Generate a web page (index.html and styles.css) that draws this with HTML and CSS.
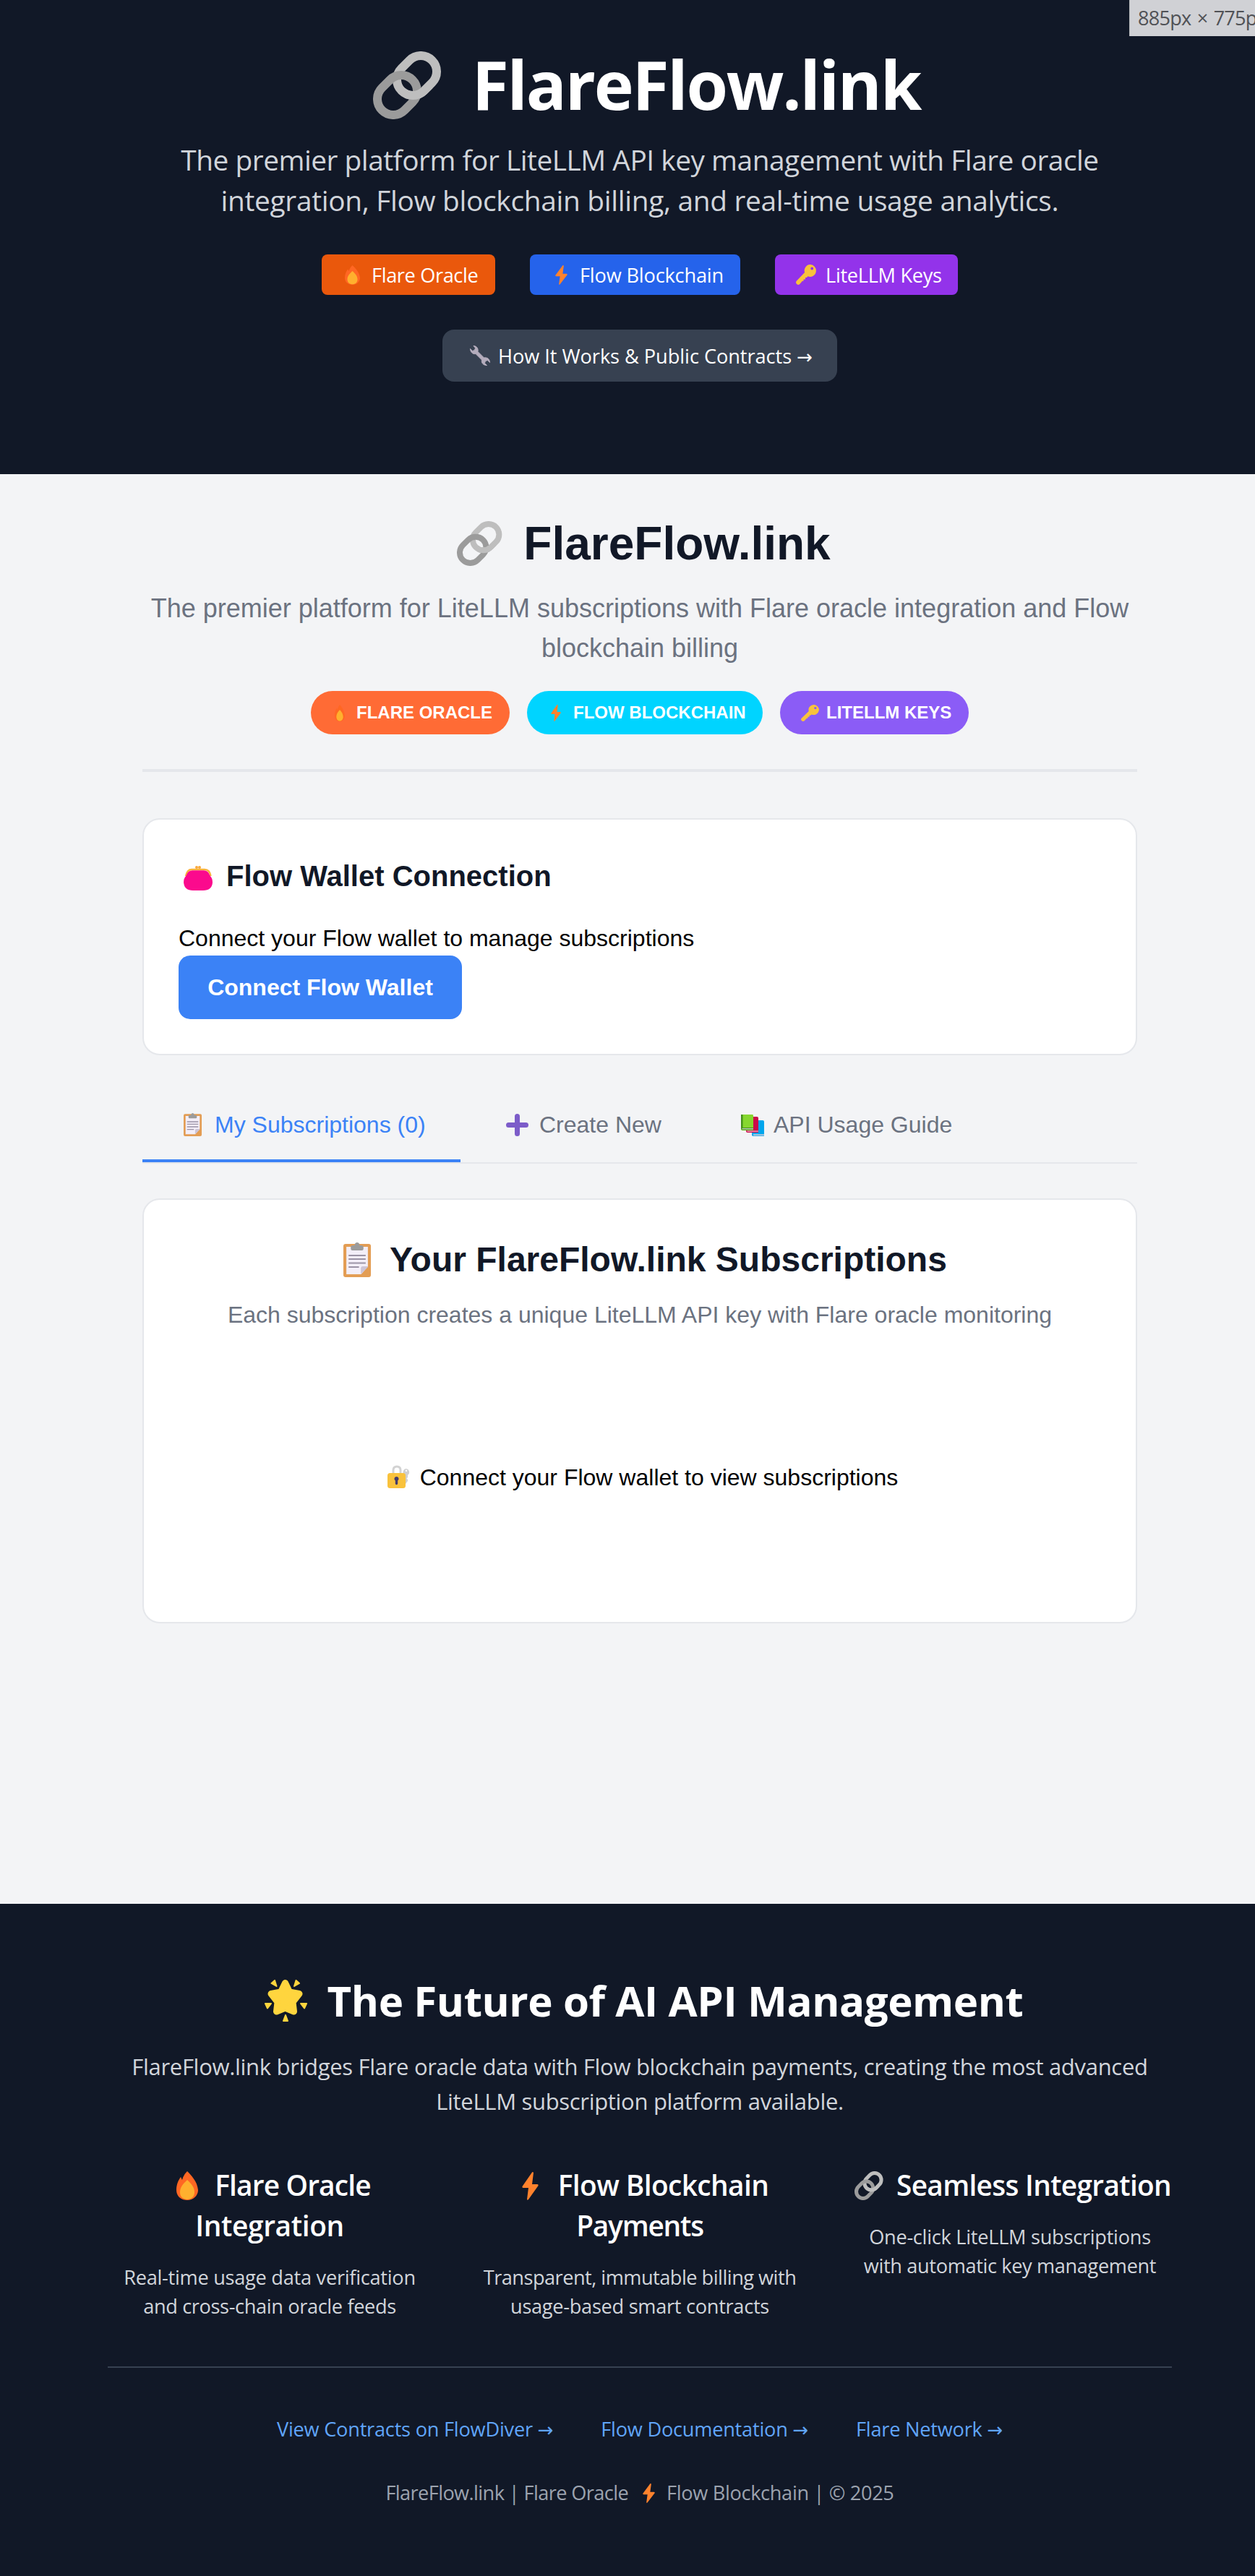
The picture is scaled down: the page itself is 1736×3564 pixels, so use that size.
FILE: index.html
```html
<!DOCTYPE html>
<html lang="en">
<head>
<meta charset="utf-8">
<title>FlareFlow.link</title>
<link rel="stylesheet" href="styles.css">
</head>
<body>
<svg class="sprite" aria-hidden="true">
  <defs>
    <clipPath id="link-over"><path d="M44 51H95V94H44z"/></clipPath>
    <symbol id="link" viewBox="0 0 95 94" preserveAspectRatio="none">
      <g fill="none" stroke-width="12">
        <rect x="30.7" y="11.5" width="59.6" height="44" rx="22" transform="rotate(-45 60.5 33.5)" stroke="#bebebe"/>
        <rect x="3.7" y="38.5" width="59.6" height="44" rx="22" transform="rotate(-45 33.5 60.5)" stroke="#9b9b9b"/>
        <g clip-path="url(#link-over)"><rect x="30.7" y="11.5" width="59.6" height="44" rx="22" transform="rotate(-45 60.5 33.5)" stroke="#bebebe"/></g>
      </g>
    </symbol>
    <symbol id="flame" viewBox="0 0 30 40" preserveAspectRatio="none">
      <path fill="#ff6723" d="M15 0C20 5 29 14 30 26C30 34 23 40 15 40C7 40 0 35 0 26C0 18 3 12 6 8C7 9 7 11 8 12C9 8 11 4 15 0Z"/>
      <path fill="#ffb02e" d="M15 12C19 16 25 21 25 29C25 35 21 39 15 39C9 39 5 35 5 29C5 21 11 16 15 12Z"/>
    </symbol>
    <symbol id="bolt" viewBox="0 0 23 39" preserveAspectRatio="none">
      <path fill="#ff822d" d="M14 .5L.5 20Q0 22 2 22H9L7 38Q7.500 39.500 9 38L22.500 19Q23 17 21 17H14L16 1Q15 -.5 14 .5Z"/>
    </symbol>
    <symbol id="key" viewBox="0 0 29 28" preserveAspectRatio="none">
      <path fill="#f9c23c" fill-rule="evenodd" d="M20 0A8.500 8.500 0 1 1 17 16.300L15.500 18H13.500V20.500H11V22.500L9 23L5.500 27A3.200 3.200 0 0 1 .8 22.700L12.500 11A8.500 8.500 0 0 1 20 0ZM23 3.500A2 2 0 1 0 23 7.500A2 2 0 1 0 23 3.500Z"/>
    </symbol>
    <symbol id="wrench" viewBox="0 0 28 28" preserveAspectRatio="none">
      <path fill="#b4acbc" stroke="#b4acbc" stroke-width="1" stroke-linejoin="round" d="M5 .5C9 .5 12 4 11 8.500L19.500 17C24 16 27.500 19 27.500 23.500L24.500 20.500L21.500 21.500L20.500 24.500L23.500 27.500C18.500 27.500 15.500 24 16.500 20L8 11.500C4 12.500 .5 9 .5 4.500L3.500 7.500L6.500 6.500L7.500 3.500Z"/>
    </symbol>
    <symbol id="purse" viewBox="0 0 40 34" preserveAspectRatio="none">
      <circle cx="18" cy="2" r="2" fill="#f9a83c"/><circle cx="22" cy="2" r="2" fill="#f9a83c"/>
      <path d="M3 14Q5 5 11 5H29Q36 5 37.500 14" fill="none" stroke="#f9b13c" stroke-width="2.500"/>
      <path fill="#fb0a8d" d="M12 6.200H28Q34 6.200 36.500 13.500Q40 17 40 23Q39 34 27 34H13Q1 34 0 23Q0 17 3.500 13.500Q6 6.200 12 6.200Z"/>
    </symbol>
    <symbol id="clipboard" viewBox="0 0 37 48" preserveAspectRatio="none">
      <rect y="2" width="37" height="46" rx="3" fill="#e39d54"/>
      <path fill="#f3eef8" d="M4 6H33V33L24 44H4z"/>
      <path fill="#cdc4d6" d="M33 34V33H26Q23.500 33 23.500 36V44Z"/>
      <path fill="#9b9b9b" d="M10 9V6Q10 4 13 4H15Q15.500 0 18.500 0Q21.500 0 22 4H24Q27 4 27 6V9Q27 11 25 11H12Q10 11 10 9Z"/>
      <path stroke="#9b93a6" stroke-width="2" d="M7 18H30M7 23H30M7 28.500H30M7 34H21"/>
    </symbol>
    <symbol id="plus" viewBox="0 0 31 31" preserveAspectRatio="none">
      <path d="M15.500 3.500V27.500M3.500 15.500H27.500" stroke="#7c5cc9" stroke-width="7" stroke-linecap="round"/>
    </symbol>
    <symbol id="books" viewBox="0 0 32 30" preserveAspectRatio="none">
      <path fill="#00a6ed" d="M15 8H30Q32 8 32 10V30H17Q15 30 15 28z"/><path fill="#9bc3e0" d="M17 27H32V29.500H17z"/>
      <path fill="#ca0b4a" d="M7 3H22Q24 3 24 5V25H9Q7 25 7 23z"/><path fill="#f3c6d6" d="M8.500 22.500H24V23.700H8.500z"/>
      <path fill="#86d72f" d="M0 0H16Q17 0 17 2V22H2Q0 22 0 20z"/><path fill="#44911b" d="M0 0H2.500V18H17V21.500H2Q0 21.500 0 19z"/><path fill="#b5cfb0" d="M1.500 19H17V20.500H1.500z"/>
    </symbol>
    <symbol id="lock" viewBox="0 0 31 32" preserveAspectRatio="none">
      <path d="M8 14V7Q8 2 13 2Q18 2 18 7V14" fill="none" stroke="#d3d3d3" stroke-width="3"/>
      <path fill="#cfcfcf" fill-rule="evenodd" d="M26 5A5 5 0 0 1 28 14V17L26.500 18.500L28 20V22L25 26L23.500 24V14A5 5 0 0 1 26 5ZM26 6.500A1.200 1.200 0 1 0 26 9A1.200 1.200 0 1 0 26 6.500Z"/>
      <rect y="11" width="25" height="21" rx="3.500" fill="#f9c23c"/>
      <path fill="#433b6b" d="M12.500 16A3 3 0 0 1 14.200 21.500V25.500A1.700 1.700 0 0 1 10.800 25.500V21.500A3 3 0 0 1 12.500 16Z"/>
    </symbol>
    <symbol id="star" viewBox="0 0 59 58" preserveAspectRatio="none">
      <g fill="#ffd53e" stroke="#ffd53e" stroke-linejoin="round">
        <path stroke-width="9" d="M28.500 4.500L34.500 17L48 19.500L39 31L40.500 44L28.500 39L16.500 44L18 31L9 19.500L22.500 17Z"/>
        <path stroke-width="2" d="M9.500 5L14 1L16.500 9ZM48 5L43.500 1L41 9ZM1 33H9L4 39.500ZM58 33H50L55 39.500ZM29 49L26 57H32Z"/>
      </g>
    </symbol>
  </defs>
</svg>

<div class="page">
  <header class="hero">
    <div class="size-badge">885px × 775px</div>
    <h1 class="hero-title"><svg class="icon hero-link"><use href="#link"/></svg><span>FlareFlow.link</span></h1>
    <p class="hero-text">
      <span class="line">The premier platform for LiteLLM API key management with Flare oracle</span>
      <span class="line line-second">integration, Flow blockchain billing, and real-time usage analytics.</span>
    </p>
    <div class="chips">
      <span class="chip chip-flare"><svg class="icon"><use href="#flame"/></svg><span>Flare Oracle</span></span>
      <span class="chip chip-flow"><svg class="icon"><use href="#bolt"/></svg><span>Flow Blockchain</span></span>
      <span class="chip chip-keys"><svg class="icon"><use href="#key"/></svg><span>LiteLLM Keys</span></span>
    </div>
    <a class="how"><svg class="icon"><use href="#wrench"/></svg><span>How It Works &amp; Public Contracts <i class="arrow">→</i></span></a>
  </header>

  <main class="app">
    <div class="app-head">
      <h2 class="app-title"><svg class="icon app-link"><use href="#link"/></svg><span>FlareFlow.link</span></h2>
      <p class="app-text">
        <span class="line">The premier platform for LiteLLM subscriptions with Flare oracle integration and Flow</span>
        <span class="line">blockchain billing</span>
      </p>
      <div class="pills">
        <span class="pill pill-flare"><svg class="icon"><use href="#flame"/></svg><span>FLARE ORACLE</span></span>
        <span class="pill pill-flow"><svg class="icon"><use href="#bolt"/></svg><span>FLOW BLOCKCHAIN</span></span>
        <span class="pill pill-keys"><svg class="icon"><use href="#key"/></svg><span>LITELLM KEYS</span></span>
      </div>
    </div>

    <section class="card wallet">
      <h3 class="wallet-title"><svg class="icon purse"><use href="#purse"/></svg><span>Flow Wallet Connection</span></h3>
      <p class="wallet-text">Connect your Flow wallet to manage subscriptions</p>
      <button class="connect">Connect Flow Wallet</button>
    </section>

    <nav class="tabs">
      <a class="tab tab-active"><svg class="icon"><use href="#clipboard"/></svg><span>My Subscriptions (0)</span></a>
      <a class="tab tab-new"><svg class="icon"><use href="#plus"/></svg><span>Create New</span></a>
      <a class="tab tab-guide"><svg class="icon"><use href="#books"/></svg><span>API Usage Guide</span></a>
    </nav>

    <section class="card subs">
      <h3 class="subs-title"><svg class="icon subs-clip"><use href="#clipboard"/></svg><span>Your FlareFlow.link Subscriptions</span></h3>
      <p class="subs-text">Each subscription creates a unique LiteLLM API key with Flare oracle monitoring</p>
      <p class="subs-empty"><svg class="icon"><use href="#lock"/></svg><span>Connect your Flow wallet to view subscriptions</span></p>
    </section>
  </main>

  <footer class="footer">
    <h2 class="footer-title"><svg class="icon star"><use href="#star"/></svg><span>The Future of AI API Management</span></h2>
    <p class="footer-text">
      <span class="line">FlareFlow.link bridges Flare oracle data with Flow blockchain payments, creating the most advanced</span>
      <span class="line">LiteLLM subscription platform available.</span>
    </p>
    <div class="features">
      <div class="feature feature-flare">
        <h4><span class="line"><svg class="icon f-flame"><use href="#flame"/></svg><span>Flare Oracle</span></span><span class="line line-second">Integration</span></h4>
        <p><span class="line">Real-time usage data verification</span><span class="line line-second">and cross-chain oracle feeds</span></p>
      </div>
      <div class="feature feature-flow">
        <h4><span class="line"><svg class="icon f-bolt"><use href="#bolt"/></svg><span>Flow Blockchain</span></span><span class="line line-second">Payments</span></h4>
        <p><span class="line">Transparent, immutable billing with</span><span class="line line-second">usage-based smart contracts</span></p>
      </div>
      <div class="feature feature-link">
        <h4><svg class="icon f-link"><use href="#link"/></svg><span>Seamless Integration</span></h4>
        <p><span class="line">One-click LiteLLM subscriptions</span><span class="line line-second">with automatic key management</span></p>
      </div>
    </div>
    <div class="links">
      <a>View Contracts on FlowDiver <i class="arrow">→</i></a>
      <a>Flow Documentation <i class="arrow">→</i></a>
      <a>Flare Network <i class="arrow">→</i></a>
    </div>
    <p class="copyright"><span class="copy-left">FlareFlow.link | Flare Oracle</span><svg class="icon"><use href="#bolt"/></svg><span>Flow Blockchain | © 2025</span></p>
  </footer>
</div>
</body>
</html>
```
FILE: styles.css
```css
* { box-sizing: border-box; margin: 0; padding: 0; }
body { overflow: hidden; background: #f3f4f6; }
.sprite { position: absolute; width: 0; height: 0; }
.page { width: 1770px; height: 3564px; overflow: hidden; white-space: nowrap; }
.icon { display: inline-block; overflow: visible; }
.line { display: block; }
.arrow { font-family: "DejaVu Sans", sans-serif; font-style: normal; font-size: 26px; line-height: 1; }

/* Dark hero */
.hero, .footer { background: #111827; color: #fff; font-family: "Open Sans", "Noto Sans", sans-serif; text-align: center; }
.hero { position: relative; height: 656px; padding-top: 64px; }
.size-badge { position: absolute; top: 0; left: 1562px; width: 208px; height: 50px; padding-left: 11px; border-left: 1px solid #b5b7bb; background: #d0d1d5; color: #505256; font-size: 27.16px; line-height: 50px; letter-spacing: -0.8px; word-spacing: 2px; text-align: left; }
.hero-title { font-size: 93px; line-height: 104px; font-weight: 700; letter-spacing: -2.215px; }
.hero-link { width: 95px; height: 94px; margin: 0 42px 0 19px; vertical-align: -13px; }
.hero-text { margin-top: 25px; font-size: 38.8px; line-height: 56px; letter-spacing: -0.468px; color: #d1d5db; }
.hero-text .line-second { letter-spacing: -0.296px; }
.chips { display: flex; justify-content: center; gap: 48px; margin-top: 47px; font-size: 27.16px; line-height: 58px; text-align: left; }
.chip { height: 56px; border-radius: 8px; padding-left: 32px; }
.chip-flare { width: 240px; background: #ea580c; letter-spacing: -0.368px; }
.chip-flow { width: 291px; background: #2563eb; padding-left: 35px; letter-spacing: -0.173px; }
.chip-keys { width: 253px; background: #9333ea; padding-left: 29px; letter-spacing: -0.298px; }
.chip .icon { width: 21px; height: 27px; margin-right: 16px; vertical-align: -3px; }
.chip-flow .icon { width: 17px; margin-right: 17px; }
.chip-keys .icon { width: 28px; height: 28px; margin-right: 13px; }
.how { display: block; width: 546px; height: 72px; margin: 48px auto 0; padding-left: 38px; border-radius: 16px; background: #374151; font-size: 27.16px; line-height: 74px; letter-spacing: -0.04px; text-align: left; }
.how .icon { width: 28px; height: 28px; margin-right: 11px; vertical-align: -3px; }

/* Light application area */
.app { width: 1376px; height: 1978px; margin: 0 auto; padding-top: 58px; font-family: "Liberation Sans", Arial, sans-serif; color: #000; }
.app-head { height: 354px; border-bottom: 4px solid #e5e7eb; text-align: center; }
.app-title { font-size: 64px; line-height: 76px; font-weight: 700; color: #111827; }
.app-link { width: 63px; height: 62px; margin: 0 29px 0 11px; vertical-align: -9px; }
.app-text { margin-top: 24px; font-size: 36px; line-height: 55px; color: #6b7280; }
.pills { display: flex; justify-content: center; gap: 24px; margin-top: 32px; font-size: 24px; line-height: 60px; font-weight: 700; color: #fff; text-align: left; }
.pill { height: 60px; border-radius: 30px; padding-left: 33px; }
.pill-flare { width: 275px; background: #ff6b35; }
.pill-flow { width: 326px; background: #00d4ff; }
.pill-keys { width: 261px; background: #8b5cf6; padding-left: 29px; }
.pill .icon { width: 14px; height: 23px; margin-right: 16px; vertical-align: -4px; }
.pill-flow .icon { margin-right: 17px; }
.pill-keys .icon { width: 25px; height: 23px; margin-right: 10px; }

.card { border: 2px solid #e5e7eb; border-radius: 24px; background: #fff; }
.wallet { height: 328px; margin-top: 64px; padding: 55px 48px 0; }
.wallet-title { font-size: 40px; line-height: 46px; font-weight: 700; color: #111827; }
.purse { width: 40px; height: 34px; margin: 0 19px 0 7px; vertical-align: -6px; }
.wallet-text { margin-top: 45px; font-size: 32px; line-height: 36px; }
.connect { display: block; width: 392px; height: 88px; margin-top: 6px; border: 0; border-radius: 16px; background: #3b82f6; color: #fff; font: 700 32px/88px "Liberation Sans", Arial, sans-serif; }

.tabs { display: flex; height: 102px; margin-top: 48px; border-bottom: 2px solid #e5e7eb; font-size: 32px; line-height: 96px; color: #6b7280; }
.tab { height: 100px; }
.tab-active { width: 440px; padding-left: 57px; border-bottom: 4px solid #3b82f6; color: #3b82f6; }
.tab-new { width: 326px; padding-left: 63px; }
.tab-guide { padding-left: 62px; }
.tab .icon { width: 25px; height: 32px; margin-right: 18px; vertical-align: -5px; }
.tab-new .icon { width: 31px; height: 31px; margin-right: 15px; }
.tab-guide .icon { width: 32px; height: 30px; margin-right: 13px; }

.subs { height: 588px; margin-top: 48px; padding-top: 55px; text-align: center; }
.subs-title { font-size: 48px; line-height: 56px; font-weight: 700; color: #111827; }
.subs-clip { width: 38px; height: 48px; margin: 0 26px 0 15px; vertical-align: -8px; }
.subs-text { margin-top: 24px; font-size: 32px; line-height: 48px; color: #6b7280; }
.subs-empty { margin-top: 177px; font-size: 32px; line-height: 48px; }
.subs-empty .icon { width: 31px; height: 32px; margin: 0 14px 0 8px; vertical-align: -4px; }

/* Footer */
.footer { height: 930px; padding-top: 98px; }
.footer-title { font-size: 58.2px; line-height: 72px; font-weight: 700; letter-spacing: -0.423px; }
.star { width: 59px; height: 58px; margin: 0 28px 0 11px; vertical-align: -7px; }
.footer-text { margin-top: 31px; font-size: 31.04px; line-height: 48px; letter-spacing: -0.32px; color: #d1d5db; }
.features { display: grid; grid-template-columns: repeat(3, 448px); gap: 64px; width: 1472px; height: 281px; margin: 64px auto 0; border-bottom: 2px solid #374151; }
.feature h4 { font-size: 38.8px; line-height: 56px; font-weight: 600; letter-spacing: -0.685px; }
.feature p { margin-top: 24px; font-size: 27.16px; line-height: 40px; letter-spacing: -0.262px; color: #d1d5db; }
.feature-flare h4 { letter-spacing: -0.823px; }
.feature-flare h4 .line-second { letter-spacing: -0.339px; }
.feature-flow h4 { letter-spacing: -0.584px; }
.feature-flow h4 .line-second { letter-spacing: -1.213px; }
.feature-flow p { letter-spacing: -0.504px; }
.feature-flow p .line-second { letter-spacing: -0.279px; }
.feature-link p .line-second, .feature-flare p .line-second { letter-spacing: -0.36px; }
.f-flame { width: 30px; height: 40px; margin: 0 23px 0 11px; vertical-align: -6px; }
.f-bolt { width: 23px; height: 39px; margin: 0 27px 0 15px; vertical-align: -6px; }
.f-link { width: 40px; height: 40px; margin: 0 18px 0 8px; vertical-align: -6px; }
.links { display: flex; justify-content: center; gap: 66px; margin-top: 65px; font-size: 27.16px; line-height: 40px; letter-spacing: -0.22px; color: #60a5fa; }
.copyright { margin-top: 48px; font-size: 27.16px; line-height: 40px; letter-spacing: -0.328px; color: #9ca3af; }
.copy-left { letter-spacing: -0.603px; }
.copyright .icon { width: 17px; height: 27px; margin: 0 16px 0 20px; vertical-align: -4px; }
```
